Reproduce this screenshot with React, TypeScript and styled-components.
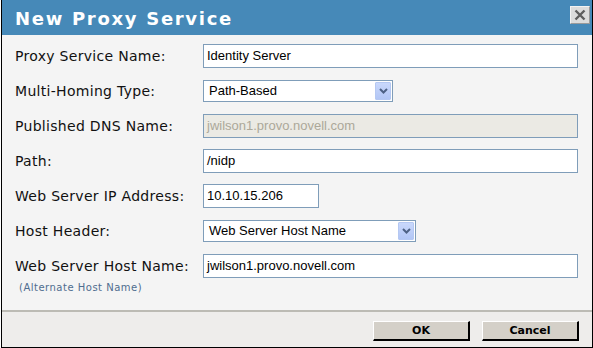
import React from 'react';
import styled, { createGlobalStyle } from 'styled-components';

const GlobalStyle = createGlobalStyle`
  html, body {
    margin: 0;
    padding: 0;
    background: #ffffff;
  }
  body {
    font-family: "DejaVu Sans", Verdana, sans-serif;
  }
`;

type Field =
  | { kind: 'input'; label: string; value: string; width: number; disabled?: boolean }
  | { kind: 'select'; label: string; value: string; width: number };

const fields: Field[] = [
  { kind: 'input', label: 'Proxy Service Name:', value: 'Identity Server', width: 375 },
  { kind: 'select', label: 'Multi-Homing Type:', value: 'Path-Based', width: 190 },
  { kind: 'input', label: 'Published DNS Name:', value: 'jwilson1.provo.novell.com', width: 375, disabled: true },
  { kind: 'input', label: 'Path:', value: '/nidp', width: 375 },
  { kind: 'input', label: 'Web Server IP Address:', value: '10.10.15.206', width: 116 },
  { kind: 'select', label: 'Host Header:', value: 'Web Server Host Name', width: 213 },
  { kind: 'input', label: 'Web Server Host Name:', value: 'jwilson1.provo.novell.com', width: 375 },
];

const Dialog = styled.div`
  width: 590px;
  height: 347px;
  margin-left: 1px;
  border: 1px solid #000;
  border-top: none;
  display: flex;
  flex-direction: column;
  background: #f4f4f4;
`;

const TitleBar = styled.div`
  height: 35px;
  flex: none;
  background: #4689b8;
  display: flex;
  align-items: center;
  justify-content: space-between;
  padding: 0 2px 0 13px;
`;

const Title = styled.h1`
  margin: 0;
  color: #ffffff;
  font-family: "DejaVu Sans", Verdana, sans-serif;
  font-weight: bold;
  font-size: 18px;
  letter-spacing: 1.7px;
  padding-top: 2px;
`;

const CloseButton = styled.button`
  width: 20px;
  height: 18px;
  padding: 0;
  margin-top: -5px;
  display: flex;
  align-items: center;
  justify-content: center;
  background: #dcdcdc;
  border: 1px solid #f2f2f2;
  border-right-color: #9a9a9a;
  border-bottom-color: #9a9a9a;
`;

const Body = styled.div`
  flex: 1;
  padding: 3px 13px 0 13px;
`;

const Row = styled.div`
  display: grid;
  grid-template-columns: 188px 1fr;
  align-items: center;
  height: 35px;
`;

const Label = styled.label`
  font-size: 14px;
  letter-spacing: 0.3px;
  color: #111111;
`;

const TextBox = styled.div<{ $width: number; $disabled?: boolean }>`
  box-sizing: border-box;
  width: ${p => p.$width}px;
  height: 24px;
  border: 1px solid #7f9db9;
  background: ${p => (p.$disabled ? '#ebeae4' : '#ffffff')};
  color: ${p => (p.$disabled ? '#aca899' : '#000000')};
  font-family: "Liberation Sans", Arial, sans-serif;
  font-size: 13px;
  display: flex;
  align-items: center;
  padding-left: 3px;
  white-space: nowrap;
  overflow: hidden;
`;

const SelectBox = styled.div<{ $width: number }>`
  box-sizing: border-box;
  width: ${p => p.$width}px;
  height: 22px;
  border: 1px solid #7f9db9;
  background: #ffffff;
  font-family: "Liberation Sans", Arial, sans-serif;
  font-size: 13px;
  display: flex;
  align-items: center;
  justify-content: space-between;
  padding: 1px 1px 1px 5px;
`;

const ArrowBox = styled.span`
  box-sizing: border-box;
  width: 16px;
  height: 18px;
  border: 1px solid #b5c8f2;
  border-radius: 1px;
  background: linear-gradient(#c9d8fc, #b2c6f5);
  display: flex;
  align-items: center;
  justify-content: center;
  align-self: flex-start;
`;

const AltName = styled.div`
  font-size: 10px;
  color: #4f6d8f;
  letter-spacing: 0.5px;
  padding-left: 4px;
  margin-top: -1px;
`;

const Footer = styled.div`
  height: 37px;
  flex: none;
  border-top: 2px solid #bcbbb4;
  background: #eeedeb;
  display: flex;
  justify-content: flex-end;
  gap: 12px;
  padding: 9px 13px 0 0;
  box-sizing: border-box;
`;

const Button = styled.button`
  box-sizing: border-box;
  width: 97px;
  height: 20px;
  padding: 0;
  background: #d4d0c8;
  border-style: solid;
  border-width: 1px 2px 2px 1px;
  border-color: #ffffff #000000 #000000 #ffffff;
  font-family: "DejaVu Sans", Tahoma, sans-serif;
  font-weight: bold;
  font-size: 11px;
  color: #000;
`;

const Chevron = () => (
  <svg width="9" height="6" viewBox="0 0 9 6">
    <path d="M1 1 L4.5 4.5 L8 1" fill="none" stroke="#4d6185" strokeWidth="2" />
  </svg>
);

const CloseIcon = () => (
  <svg width="12" height="12" viewBox="0 0 12 12">
    <path d="M1.5 1.5 L10.5 10.5 M10.5 1.5 L1.5 10.5" stroke="#5e5e5e" strokeWidth="2.4" />
  </svg>
);

const App = () => (
  <>
    <GlobalStyle />
    <Dialog>
      <TitleBar>
        <Title>New Proxy Service</Title>
        <CloseButton aria-label="Close">
          <CloseIcon />
        </CloseButton>
      </TitleBar>
      <Body>
        {fields.map(f => (
          <Row key={f.label}>
            <Label>{f.label}</Label>
            {f.kind === 'input' ? (
              <TextBox $width={f.width} $disabled={f.disabled}>
                {f.value}
              </TextBox>
            ) : (
              <SelectBox $width={f.width}>
                {f.value}
                <ArrowBox>
                  <Chevron />
                </ArrowBox>
              </SelectBox>
            )}
          </Row>
        ))}
        <AltName>(Alternate Host Name)</AltName>
      </Body>
      <Footer>
        <Button>OK</Button>
        <Button>Cancel</Button>
      </Footer>
    </Dialog>
  </>
);

export default App;
